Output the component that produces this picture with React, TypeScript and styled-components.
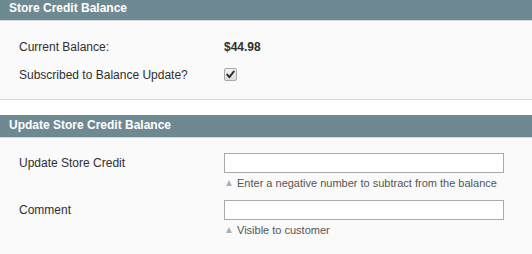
import React from "react";
import styled, { createGlobalStyle } from "styled-components";

const GlobalStyle = createGlobalStyle`
  html, body {
    margin: 0;
    padding: 0;
    background: #ffffff;
  }
  body {
    font-family: "Liberation Sans", Arial, sans-serif;
    font-size: 12px;
    color: #2f2f2f;
  }
`;

const Page = styled.div`
  width: 532px;
  margin-top: -2px;
  display: flex;
  flex-direction: column;
  gap: 15px;
`;

const Section = styled.section`
  display: flex;
  flex-direction: column;
`;

const Head = styled.h4`
  margin: 0;
  height: 22px;
  line-height: 21px;
  padding: 0 9px;
  background: #6f8992;
  color: #ffffff;
  font-size: 12px;
  font-weight: bold;
`;

const Fieldset = styled.div<{ $open?: boolean }>`
  background: #fafafa;
  border-top: 1px solid #d6d6d6;
  border-bottom: ${(p) => (p.$open ? "none" : "1px solid #d6d6d6")};
  padding: ${(p) => (p.$open ? "15px 0 20px 19px" : "17px 0 15px 19px")};
  display: flex;
  flex-direction: column;
  gap: 10px;
`;

const Row = styled.div`
  display: grid;
  grid-template-columns: 205px 280px;
  align-items: center;
  line-height: 18px;
`;

const FieldRow = styled.div`
  display: grid;
  grid-template-columns: 205px 280px;
  row-gap: 3px;
  align-items: center;
`;

const Label = styled.span`
  color: #2f2f2f;
  font-size: 12px;
`;

const Value = styled.strong`
  font-weight: bold;
  color: #2f2f2f;
`;

const Check = styled.span`
  display: inline-flex;
  align-items: center;
  justify-content: center;
  width: 11px;
  height: 11px;
  border: 1px solid #a7a7a7;
  border-radius: 2px;
  background: linear-gradient(#f4f4f4, #dcdcdc);
  box-sizing: content-box;
`;

const TextInput = styled.input`
  box-sizing: border-box;
  width: 280px;
  height: 20px;
  margin: 0;
  padding: 2px;
  border: 1px solid #aaaaaa;
  background: #ffffff;
  font: 12px "Liberation Sans", Arial, sans-serif;
  outline: none;
`;

const Note = styled.p`
  grid-column: 2;
  margin: 0;
  font-size: 11px;
  line-height: 14px;
  color: #555555;
  display: flex;
  align-items: center;

  &::before {
    content: "";
    display: inline-block;
    width: 0;
    height: 0;
    margin: 0 5px 0 2px;
    border-left: 3.5px solid transparent;
    border-right: 3.5px solid transparent;
    border-bottom: 6px solid #a6b2b6;
  }
`;

const CheckMark = () => (
  <svg width="9" height="9" viewBox="0 0 9 9" aria-hidden="true">
    <path d="M1.2 4.6 L3.4 7.2 L7.9 1.4" fill="none" stroke="#2f2f2f" strokeWidth="1.9" strokeLinecap="round" strokeLinejoin="round" />
  </svg>
);

export default function App() {
  return (
    <>
      <GlobalStyle />
      <Page>
        <Section>
          <Head>Store Credit Balance</Head>
          <Fieldset>
            <Row>
              <Label>Current Balance:</Label>
              <Value>$44.98</Value>
            </Row>
            <Row>
              <Label>Subscribed to Balance Update?</Label>
              <span>
                <Check>
                  <CheckMark />
                </Check>
              </span>
            </Row>
          </Fieldset>
        </Section>
        <Section>
          <Head>Update Store Credit Balance</Head>
          <Fieldset $open>
            <FieldRow>
              <Label>Update Store Credit</Label>
              <TextInput type="text" />
              <Note>Enter a negative number to subtract from the balance</Note>
            </FieldRow>
            <FieldRow>
              <Label>Comment</Label>
              <TextInput type="text" />
              <Note>Visible to customer</Note>
            </FieldRow>
          </Fieldset>
        </Section>
      </Page>
    </>
  );
}
